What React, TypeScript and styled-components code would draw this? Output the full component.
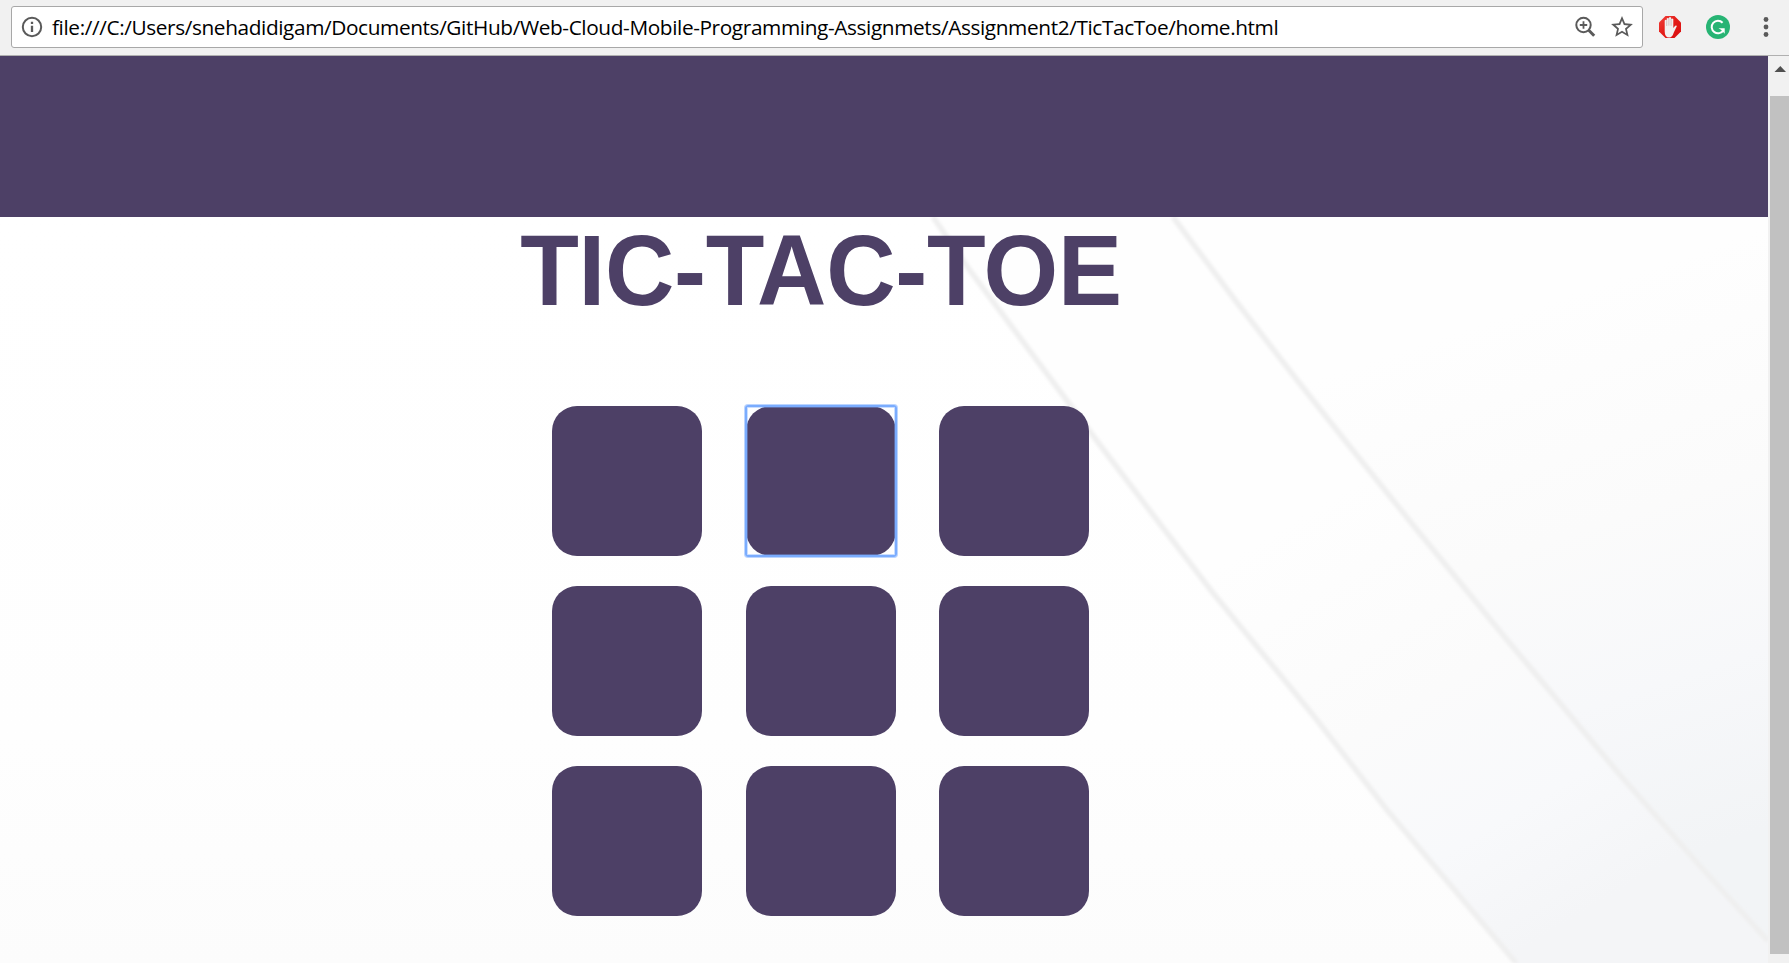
import React, { useState } from 'react';
import styled, { createGlobalStyle } from 'styled-components';

const PURPLE = '#4d4066';

const GlobalStyle = createGlobalStyle`
  * { box-sizing: border-box; }
  html, body { margin: 0; padding: 0; background: #fff; }
  body { overflow: hidden; }
`;

const Window = styled.div`
  width: 100vw;
  height: 100vh;
  display: flex;
  flex-direction: column;
  overflow: hidden;
`;

const Toolbar = styled.header`
  display: flex;
  align-items: flex-start;
  flex: 0 0 56px;
  padding: 6px 0 0 11px;
  background: #f1f1f1;
  border-bottom: 1px solid #b0b0b0;
`;

const AddressBar = styled.div`
  display: flex;
  align-items: center;
  width: 1632px;
  height: 42px;
  padding: 0 8px 0 9px;
  background: #fff;
  border: 1px solid #a8a8a8;
  border-radius: 3px;
`;

const Url = styled.span`
  flex: 1;
  margin-left: 9px;
  font-family: 'Open Sans', 'Noto Sans', sans-serif;
  font-size: 20.8px;
  line-height: 40px;
  letter-spacing: -0.385px;
  white-space: nowrap;
  color: #000;
`;

const AddressActions = styled.div`
  display: flex;
  align-items: center;
  gap: 14px;
`;

const Extensions = styled.div`
  display: flex;
  align-items: center;
  height: 42px;
  margin-left: 15px;
`;

const Icon = styled.svg<{ $gap?: number }>`
  display: block;
  flex: none;
  margin-left: ${(p) => p.$gap ?? 0}px;
`;

const Viewport = styled.div`
  display: flex;
  flex: 1;
  min-height: 0;
`;

const Page = styled.main`
  position: relative;
  width: 1768px;
  overflow: hidden;
`;

const Backdrop = styled.svg`
  position: absolute;
  left: 0;
  top: 161px;
  z-index: 0;
`;

const Banner = styled.div`
  height: 161px;
  background: ${PURPLE};
`;

const Content = styled.section`
  position: relative;
  z-index: 1;
  display: flex;
  flex-direction: column;
  align-items: center;
  width: 1641px;
`;

const Title = styled.h1`
  margin: 0;
  padding: 1px 0 0 1px;
  height: 189px;
  font-family: 'Liberation Sans', Arial, sans-serif;
  font-size: 96px;
  font-weight: 700;
  line-height: 108px;
  letter-spacing: -0.25px;
  color: ${PURPLE};
  white-space: nowrap;
  transform-origin: 50% 88px;
  transform: scaleY(1.04);
`;

const Board = styled.div`
  display: grid;
  grid-template-columns: repeat(3, 150px);
  column-gap: 43.5px;
  row-gap: 30px;
`;

const Cell = styled.button<{ $active: boolean }>`
  display: block;
  width: 150px;
  height: 150px;
  padding: 0;
  border: 0;
  border-radius: 25px;
  background: ${PURPLE};
  position: relative;
  outline: none;
  &::after {
    content: '';
    display: ${(p) => (p.$active ? 'block' : 'none')};
    position: absolute;
    inset: -1px;
    border: 2px solid #7aacfe;
    border-radius: 3px;
    box-shadow: 0 0 0 1px rgba(122, 172, 254, 0.5), inset 0 0 0 1px rgba(122, 172, 254, 0.4);
  }
`;

const Scrollbar = styled.aside`
  display: flex;
  flex-direction: column;
  align-items: center;
  width: 21px;
  padding-left: 2px;
  background: #f1f1f1;
`;

const ScrollArrow = styled.svg`
  display: block;
  flex: none;
`;

const ScrollThumb = styled.div`
  width: 19px;
  height: 858px;
  background: #c1c1c1;
`;

const LINE_A = 'M933 0 L971 55 L1012 110 L1100 228 L1157 303 L1213 376 L1313 498 L1387 593 L1463 683 L1516 746';
const LINE_B = 'M1173 0 L1235 83 L1297 163 L1347 226 L1413 308 L1503 418 L1620 558 L1700 649 L1768 724';

function PageBackdrop() {
  return (
    <Backdrop width="1768" height="746" viewBox="0 0 1768 746">
      <defs>
        <linearGradient id="base" x1="0" y1="0" x2="0" y2="1">
          <stop offset="0" stopColor="#ffffff" />
          <stop offset="0.7" stopColor="#fefefe" />
          <stop offset="1" stopColor="#fcfcfc" />
        </linearGradient>
        <linearGradient id="band" gradientUnits="userSpaceOnUse" x1="1250" y1="330" x2="1500" y2="746">
          <stop offset="0" stopColor="#fefefe" />
          <stop offset="0.45" stopColor="#fbfbfb" />
          <stop offset="0.75" stopColor="#f8f9fb" />
          <stop offset="1" stopColor="#f4f5f7" />
        </linearGradient>
        <linearGradient id="corner" gradientUnits="userSpaceOnUse" x1="1500" y1="100" x2="1680" y2="640">
          <stop offset="0" stopColor="#fefefe" />
          <stop offset="0.4" stopColor="#fbfbfb" />
          <stop offset="0.7" stopColor="#f7f8fa" />
          <stop offset="1" stopColor="#f2f4f6" />
        </linearGradient>
        <filter id="soft" x="-5%" y="-5%" width="110%" height="110%">
          <feGaussianBlur stdDeviation="1.5" />
        </filter>
      </defs>
      <rect width="1768" height="746" fill="url(#base)" />
      <path d={`${LINE_A} L1768 746 V0 Z`} fill="url(#band)" />
      <path d={`${LINE_B} V0 Z`} fill="url(#corner)" />
      <g fill="none" stroke="#efefef" strokeWidth="5.500" filter="url(#soft)">
        <path d={LINE_A} />
        <path d={LINE_B} />
      </g>
    </Backdrop>
  );
}

export default function App() {
  const [selected, setSelected] = useState(1);
  return (
    <Window>
      <GlobalStyle />
      <Toolbar>
        <AddressBar>
          <Icon width="22" height="22" viewBox="0 0 22 22">
            <circle cx="11" cy="11" r="9.2" fill="none" stroke="#5a5a5a" strokeWidth="2" />
            <path d="M11 9.700v6.300M11 5.700v2.300" stroke="#5a5a5a" strokeWidth="2.300" />
          </Icon>
          <Url>file:///C:/Users/snehadidigam/Documents/GitHub/Web-Cloud-Mobile-Programming-Assignmets/Assignment2/TicTacToe/home.html</Url>
          <AddressActions>
            <Icon width="22" height="22" viewBox="0 0 22 22" fill="none" stroke="#5a5a5a">
              <circle cx="9.500" cy="9" r="7.200" strokeWidth="2" />
              <path d="M14.500 14l5.700 5.700" strokeWidth="3" />
              <path d="M9.500 5.300v7.400M5.800 9h7.400" strokeWidth="1.800" />
            </Icon>
            <Icon width="24" height="24" viewBox="1 1 22 22" fill="#5a5a5a">
              <path d="M22 9.240l-7.190-.62L12 2 9.190 8.630 2 9.240l5.460 4.730L5.820 21 12 17.270 18.180 21l-1.630-7.030L22 9.240zM12 15.400l-3.760 2.270 1-4.280-3.320-2.880 4.380-.38L12 6.100l1.710 4.040 4.380.38-3.320 2.880 1 4.280L12 15.400z" />
            </Icon>
          </AddressActions>
        </AddressBar>
        <Extensions>
          <Icon width="24" height="24" viewBox="0 0 24 24">
            <defs>
              <linearGradient id="stop" x1="0" y1="0" x2="1" y2="1">
                <stop offset="0" stopColor="#f0403a" />
                <stop offset="0.500" stopColor="#e31b17" />
                <stop offset="1" stopColor="#d80f10" />
              </linearGradient>
            </defs>
            <path d="M7.500 1h9L23 7.500v9L16.500 23h-9L1 16.500v-9z" fill="url(#stop)" />
            <path d="M6.700 12.500V5.500q1-1.300 2 0V3.600q1.100-1.400 2.200 0v-.9q1.100-1.300 2.200 0v1.400q1.100-1.300 2.200 0v9l1.900-2.400q1.500-.7 1.600.6l-3 6.200q-1.500 5-4.500 5-4.600 0-4.600-6z" fill="#f1f1f1" />
            <path d="M8.700 5.500v5.500M10.900 3.600v7M13.100 4v6.800" stroke="#c3a5a5" strokeWidth="0.600" />
          </Icon>
          <Icon $gap={23} width="26" height="26" viewBox="0 0 26 26">
            <circle cx="13" cy="13" r="12" fill="#27b474" />
            <path d="M17.600 8.700A6.300 6.300 0 1 0 18.500 16" fill="none" stroke="#fff" strokeWidth="2" />
            <path d="M13.500 14.200h6.200v5.500l-2-2.200-1.700-1.800z" fill="#fff" />
          </Icon>
          <Icon $gap={31} width="8" height="24" viewBox="0 0 8 24" fill="#5a5a5a">
            <circle cx="4" cy="4.500" r="2.400" />
            <circle cx="4" cy="12" r="2.400" />
            <circle cx="4" cy="19.500" r="2.400" />
          </Icon>
        </Extensions>
      </Toolbar>
      <Viewport>
        <Page>
          <PageBackdrop />
          <Banner />
          <Content>
            <Title>TIC-TAC-TOE</Title>
            <Board>
              {Array.from({ length: 9 }, (_, i) => (
                <Cell key={i} $active={i === selected} onClick={() => setSelected(i)} aria-label={`Square ${i + 1}`} />
              ))}
            </Board>
          </Content>
        </Page>
        <Scrollbar>
          <ScrollArrow width="19" height="40" viewBox="0 0 19 40">
            <path d="M4.500 16L10.300 10l5.700 6z" fill="#505050" />
          </ScrollArrow>
          <ScrollThumb />
        </Scrollbar>
      </Viewport>
    </Window>
  );
}
